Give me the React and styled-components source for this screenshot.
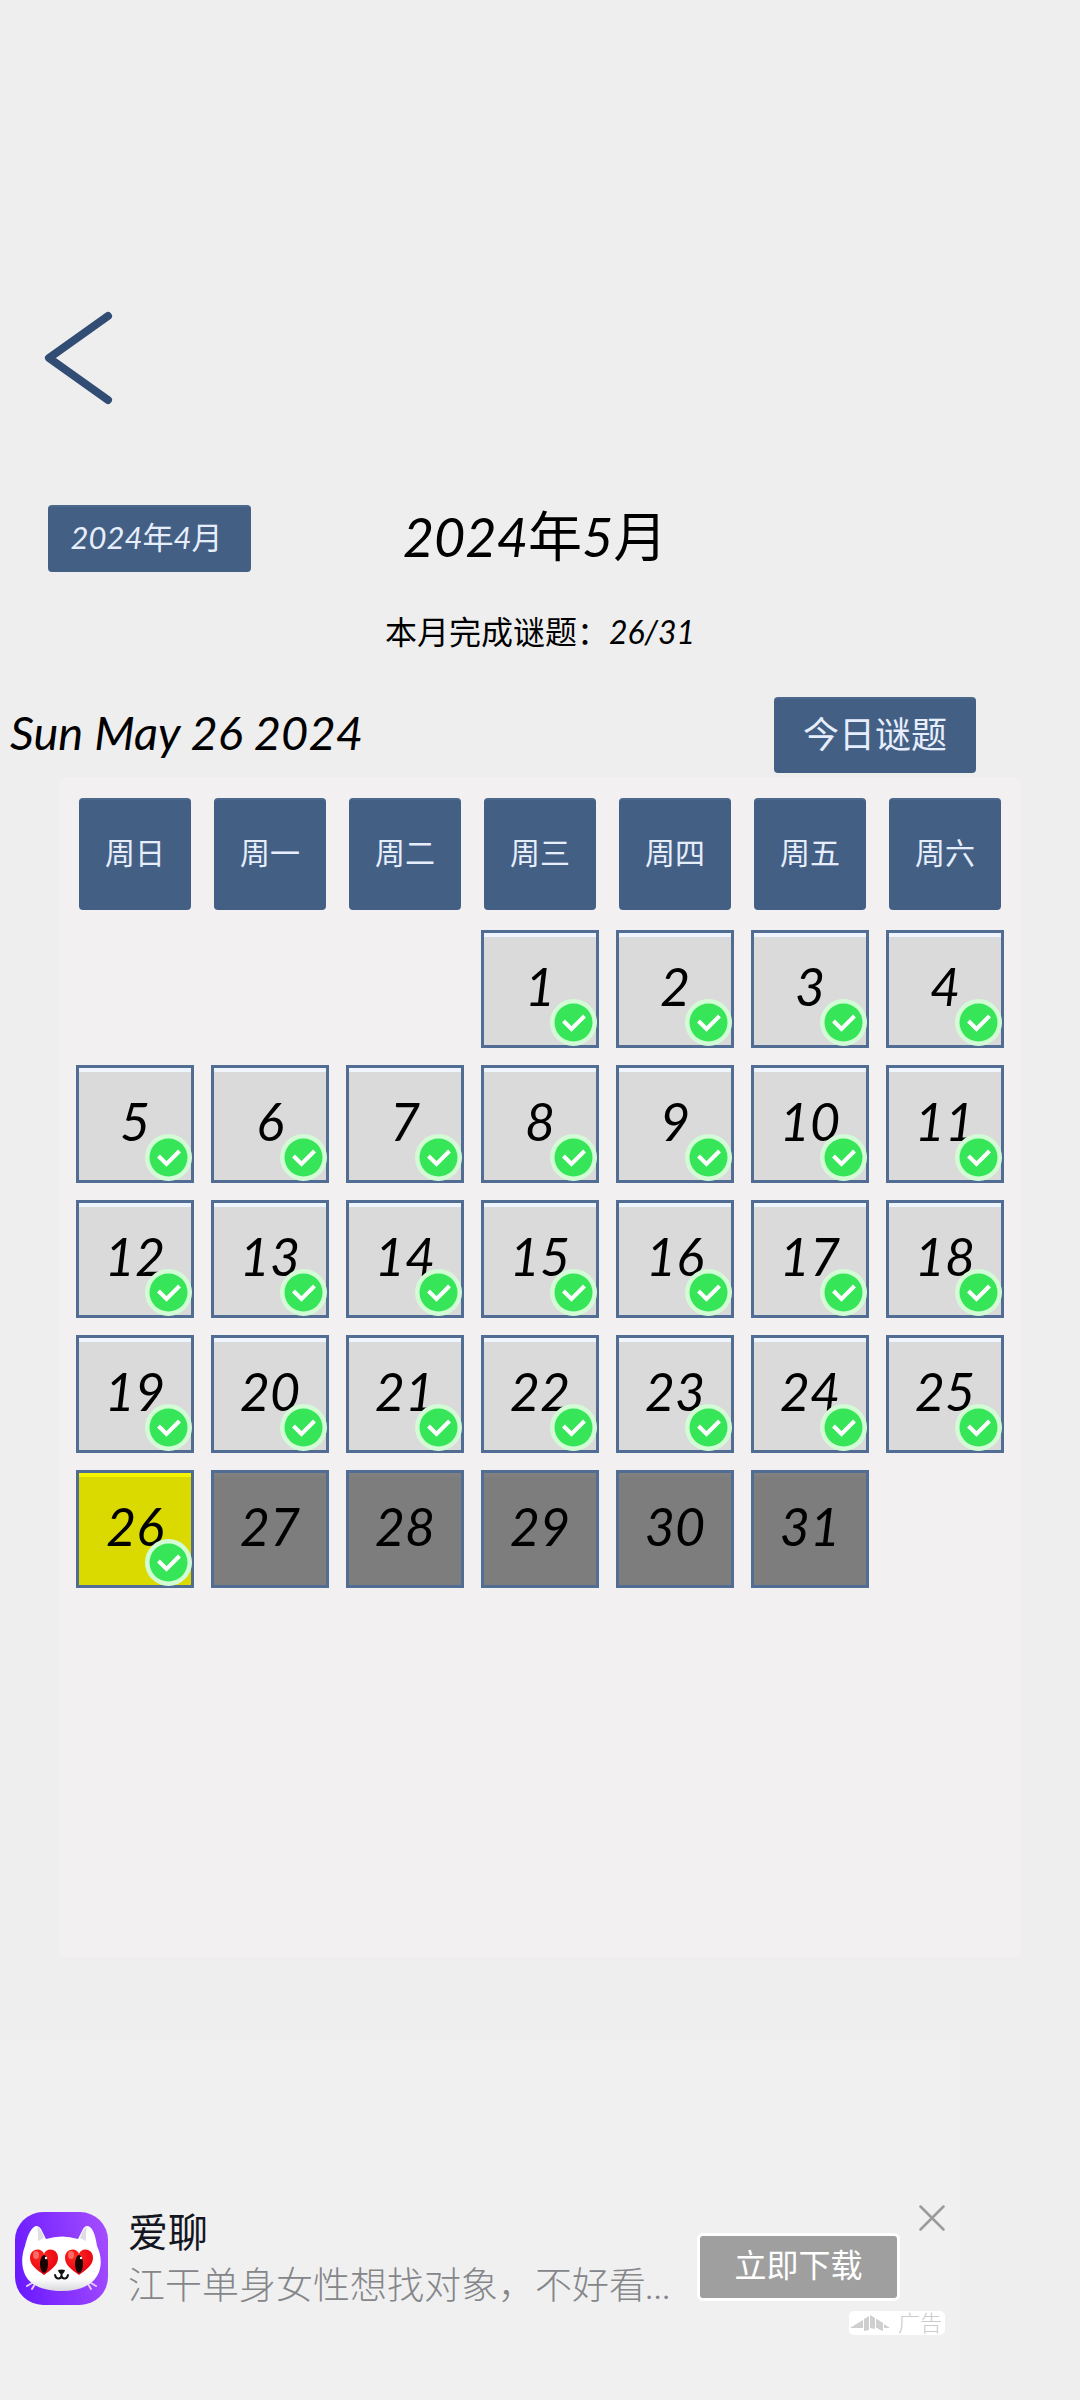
import React from "react";
import styled, { createGlobalStyle } from "styled-components";

const WEEKDAYS = ["周日", "周一", "周二", "周三", "周四", "周五", "周六"];
const FIRST_WEEKDAY = 3;
const DAYS_IN_MONTH = 31;
const TODAY = 26;

const buildWeeks = () => {
  const cells = Array(FIRST_WEEKDAY).fill(null);
  for (let day = 1; day <= DAYS_IN_MONTH; day++) {
    cells.push(day);
  }
  const weeks = [];
  for (let i = 0; i < cells.length; i += 7) {
    weeks.push(cells.slice(i, i + 7));
  }
  return weeks;
};

const getStatus = (day) => {
  if (day === TODAY) return "today";
  return day < TODAY ? "done" : "locked";
};

const CheckIcon = () => (
  <svg viewBox="0 0 47 47" width="100%" height="100%" aria-hidden="true">
    <circle cx="23.5" cy="23.5" r="23.5" fill="#d3fbd6" />
    <circle cx="23.5" cy="23.5" r="19" fill="#37e558" />
    <path
      d="M13.5 22L21.5 30L34.5 17"
      fill="none"
      stroke="#fff"
      strokeWidth="4"
    />
  </svg>
);

const CatLogo = () => (
  <svg viewBox="0 0 93 93" width="93" height="93" aria-hidden="true">
    <defs>
      <linearGradient id="purple" x1="0" y1="0.6" x2="1" y2="0.4">
        <stop offset="0" stopColor="#6a1bff" />
        <stop offset="1" stopColor="#a34bff" />
      </linearGradient>
      <linearGradient id="fur" x1="0" y1="0" x2="0" y2="1">
        <stop offset="0.8" stopColor="#fff" />
        <stop offset="1" stopColor="#d9d9dd" />
      </linearGradient>
      <radialGradient id="heart" cx="0.4" cy="0.3" r="0.7">
        <stop offset="0" stopColor="#ff2a22" />
        <stop offset="1" stopColor="#e60010" />
      </radialGradient>
    </defs>
    <rect width="93" height="93" rx="28" fill="url(#purple)" />
    <path
      d="M12 74L17 71M17 77L20 72M81 74L76 71M76 77L73 72"
      stroke="#e6c9ff"
      strokeWidth="2"
      strokeLinecap="round"
    />
    <path
      d="M10 34C12 25 15 18 19 15C21 13 24 14 26 17L31 27Q47 22 63 27L68 17C70 14 72 13 75 15C79 18 81 27 82 34C86 42 87 52 84 60C79 73 65 79 47 79C28 79 13 73 9 60C6 51 7 42 10 34Z"
      fill="url(#fur)"
    />
    <path d="M22 15C25 16 27 20 29 26L23 29C23 23 23 18 22 15Z" fill="#dddde4" />
    <path d="M72 15C69 16 67 20 65 26L71 29C71 23 71 18 72 15Z" fill="#dddde4" />
    <path
      d="M29 42C27 35 15 36 15 46C15 53 22 58 29 63C36 58 43 53 43 46C43 36 31 35 29 42Z"
      fill="url(#heart)"
    />
    <path
      d="M64 42C62 35 50 36 50 46C50 53 57 58 64 63C71 58 78 53 78 46C78 36 66 35 64 42Z"
      fill="url(#heart)"
    />
    <ellipse cx="21" cy="43" rx="3" ry="4" fill="#ff8c82" opacity="0.7" />
    <ellipse cx="56" cy="43" rx="3" ry="4" fill="#ff8c82" opacity="0.7" />
    <ellipse cx="29" cy="52" rx="4" ry="9" fill="#190404" />
    <ellipse cx="64" cy="52" rx="4" ry="9" fill="#190404" />
    <circle cx="31" cy="46" r="1.2" fill="#fff" />
    <circle cx="66" cy="46" r="1.2" fill="#fff" />
    <path d="M43 58Q46.500 57 50 58Q49 62 46.500 62Q44 62 43 58Z" fill="#111" />
    <path
      d="M46.500 61V64M40 63Q41 67 44 66.500Q46.500 66 46.500 63.500Q46.500 66 49 66.500Q52 67 53 63"
      fill="none"
      stroke="#111"
      strokeWidth="2"
      strokeLinecap="round"
    />
  </svg>
);

const AdMark = () => (
  <svg viewBox="0 0 40 17" width="40" height="17" fill="#cfcfcf" aria-hidden="true">
    <path d="M0 13L13 5V13Z" />
    <path d="M14 4L19 1V15L14 16Z" />
    <path d="M20 0L25 3V14L20 13Z" />
    <path d="M26 4L27 4L33 8V16L28 14V13L26 13Z" />
    <path d="M34 9L40 13H34Z" />
  </svg>
);

const App = () => {
  const weeks = buildWeeks();

  return (
    <>
      <GlobalStyle />
      <Page>
        <main>
          <BackButton type="button" aria-label="返回">
            <svg viewBox="0 0 76 96" width="76" height="96" aria-hidden="true">
              <path
                d="M68 6L9 48L68 90"
                fill="none"
                stroke="#324d74"
                strokeWidth="8"
                strokeLinecap="round"
                strokeLinejoin="round"
              />
            </svg>
          </BackButton>

          <MonthBar>
            <PrevMonthButton type="button">2024年4月</PrevMonthButton>
            <MonthTitle>2024年5月</MonthTitle>
          </MonthBar>
          <Progress>本月完成谜题：26/31</Progress>

          <DateBar>
            <CurrentDate>Sun May 26 2024</CurrentDate>
            <TodayButton type="button">今日谜题</TodayButton>
          </DateBar>

          <CalendarPanel>
            <Calendar>
              <thead>
                <tr>
                  {WEEKDAYS.map((name) => (
                    <th key={name} scope="col">
                      <Weekday>{name}</Weekday>
                    </th>
                  ))}
                </tr>
              </thead>
              <tbody>
                {weeks.map((week, index) => (
                  <tr key={index}>
                    {week.map((day, column) => (
                      <td key={column}>
                        {day && (
                          <DayButton
                            type="button"
                            $status={getStatus(day)}
                            disabled={day > TODAY}
                          >
                            {day}
                            {day <= TODAY && (
                              <Badge>
                                <CheckIcon />
                              </Badge>
                            )}
                          </DayButton>
                        )}
                      </td>
                    ))}
                  </tr>
                ))}
              </tbody>
            </Calendar>
          </CalendarPanel>
        </main>

        <AdBanner>
          <CatLogo />
          <AdText>
            <AdTitle>爱聊</AdTitle>
            <AdDescription>江干单身女性想找对象，不好看...</AdDescription>
          </AdText>
          <DownloadButton type="button">立即下载</DownloadButton>
          <CloseButton type="button" aria-label="关闭">
            <svg viewBox="0 0 26 26" width="26" height="26" aria-hidden="true">
              <path
                d="M1.500 1.500L24.500 24.500M24.500 1.500L1.500 24.500"
                stroke="#9b9b9b"
                strokeWidth="2.500"
                strokeLinecap="round"
              />
            </svg>
          </CloseButton>
          <AdTag>
            <AdMark />
            广告
          </AdTag>
        </AdBanner>
      </Page>
    </>
  );
};

export default App;

const GlobalStyle = createGlobalStyle`
  * {
    box-sizing: border-box;
  }
  body {
    margin: 0;
    background: #eeeeee;
    color: #000;
    font-family: Lato, "Noto Sans CJK SC", sans-serif;
    font-style: italic;
    font-weight: 400;
    font-synthesis: none;
  }
  button {
    padding: 0;
    border: none;
    background: none;
    font: inherit;
    cursor: pointer;
  }
  svg {
    display: block;
  }
`;

const Page = styled.div`
  display: flex;
  flex-direction: column;
  min-height: 100vh;
  padding-top: 310px;
`;

const BackButton = styled.button`
  display: block;
  margin-left: 40px;
`;

const MonthBar = styled.div`
  display: grid;
  grid-template-columns: 1fr auto 1fr;
  align-items: center;
  margin-top: 99px;
  padding: 0 58px 0 48px;
`;

const BlueButton = styled.button`
  padding-bottom: 8px;
  border-top: 2px solid #4d688d;
  border-radius: 4px;
  background: #445f84;
  color: #e6eefc;
  text-align: center;
`;

const PrevMonthButton = styled(BlueButton)`
  justify-self: start;
  width: 203px;
  height: 67px;
  padding-right: 6px;
  font-size: 31px;
`;

const MonthTitle = styled.h1`
  margin: 0;
  padding-bottom: 4px;
  font-size: 54px;
  font-weight: 400;
  line-height: 63px;
`;

const Progress = styled.p`
  margin: 36px 0 0;
  font-size: 32px;
  line-height: 48px;
  text-align: center;
`;

const DateBar = styled.div`
  display: flex;
  justify-content: space-between;
  align-items: center;
  margin-top: 41px;
  padding: 0 104px 0 10px;
`;

const CurrentDate = styled.time`
  padding-bottom: 6px;
  font-size: 47px;
  line-height: 68px;
`;

const TodayButton = styled(BlueButton)`
  width: 202px;
  height: 76px;
  font-size: 36px;
`;

const CalendarPanel = styled.section`
  min-height: 1181px;
  margin: 4px 58px 0 59px;
  padding: 1px 1px 0 0;
  border-radius: 8px;
  background: #f2f0f1;
`;

const Calendar = styled.table`
  width: 100%;
  border-collapse: separate;
  border-spacing: 17px;
  table-layout: fixed;

  th,
  td {
    padding: 0;
    font-weight: 400;
  }
`;

const Weekday = styled.div`
  display: flex;
  align-items: center;
  justify-content: center;
  aspect-ratio: 1;
  margin: 3px;
  padding-bottom: 8px;
  border-top: 2px solid #4d688d;
  border-radius: 4px;
  background: #445f84;
  color: #e6eefc;
  font-size: 30px;
`;

const dayColors = {
  done: { fill: "#dadada", shine: "#eef5ff" },
  today: { fill: "#dada00", shine: "#f4f400" },
  locked: { fill: "#7d7d7d", shine: "#808080" },
};

const DayButton = styled.button`
  position: relative;
  display: flex;
  align-items: center;
  justify-content: center;
  width: 100%;
  aspect-ratio: 1;
  padding-bottom: 6px;
  border: 3px solid #526d93;
  background: ${({ $status }) => dayColors[$status].fill};
  box-shadow: inset 0 4px 0 ${({ $status }) => dayColors[$status].shine};
  color: #000;
  font-size: 52px;
`;

const Badge = styled.span`
  position: absolute;
  right: -1px;
  bottom: -1px;
  width: 47px;
  height: 47px;
`;

const AdBanner = styled.aside`
  display: grid;
  grid-template-columns: 93px 1fr 203px 45px;
  grid-template-rows: 106px 24px;
  align-items: center;
  width: calc(100% - 120px);
  min-height: 360px;
  margin-top: 82px;
  padding: 165px 15px 65px;
  background: #f0f0f0;
  font-weight: 300;
`;

const AdText = styled.div`
  padding-left: 20px;
`;

const AdTitle = styled.h2`
  margin: 0;
  color: #14161f;
  font-size: 40px;
  font-weight: 400;
  line-height: 54px;
`;

const AdDescription = styled.p`
  margin: 0;
  color: #85868a;
  font-size: 37px;
  line-height: 52px;
  white-space: nowrap;
`;

const DownloadButton = styled.button`
  align-self: end;
  height: 68px;
  margin-bottom: 10px;
  padding-bottom: 8px;
  border: 3px solid #fff;
  border-radius: 6px;
  background: #9f9f9f;
  color: #fff;
  font-size: 32px;
  font-weight: 400;
`;

const CloseButton = styled.button`
  align-self: start;
  justify-self: end;
`;

const AdTag = styled.div`
  display: flex;
  grid-column: 3 / -1;
  align-items: center;
  justify-content: space-between;
  justify-self: end;
  width: 96px;
  height: 24px;
  padding: 0 3px 0 1px;
  border-radius: 5px;
  background: #fff;
  color: #cccccc;
  font-size: 22px;
  line-height: 20px;
`;
